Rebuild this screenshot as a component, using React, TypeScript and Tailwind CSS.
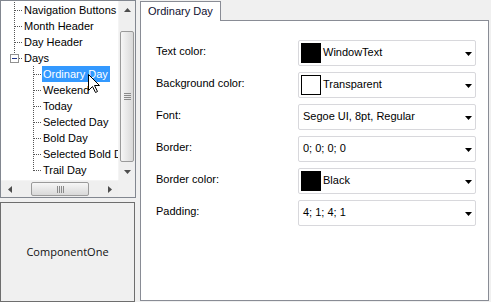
import { FC } from "react";

type TreeItem = { label: string; level: 0 | 1; last?: boolean; expander?: boolean; selected?: boolean };

const treeItems: TreeItem[] = [
    { label: "Navigation Buttons", level: 0 },
    { label: "Month Header", level: 0 },
    { label: "Day Header", level: 0 },
    { label: "Days", level: 0, last: true, expander: true },
    { label: "Ordinary Day", level: 1, selected: true },
    { label: "Weekend", level: 1 },
    { label: "Today", level: 1 },
    { label: "Selected Day", level: 1 },
    { label: "Bold Day", level: 1 },
    { label: "Selected Bold Day", level: 1 },
    { label: "Trail Day", level: 1, last: true },
];

const DOT = "#555";

// dotted tree connectors for a single row
const Connector: FC<{ item: TreeItem }> = ({ item }) => {
    if (item.level === 0) {
        return (
            <svg width="22" height="16" className="shrink-0">
                {item.expander ? (
                    <>
                        <line x1="13.5" y1="0" x2="13.5" y2="4" stroke={DOT} strokeDasharray="1 1" />
                        <rect x="9.5" y="4.5" width="8" height="8" fill="#fff" stroke="#919191" />
                        <line x1="11" y1="8.5" x2="16" y2="8.5" stroke="#1e3287" />
                        <line x1="18" y1="8.5" x2="22" y2="8.5" stroke={DOT} strokeDasharray="1 1" />
                    </>
                ) : (
                    <>
                        <line x1="13.5" y1="0" x2="13.5" y2="16" stroke={DOT} strokeDasharray="1 1" />
                        <line x1="14" y1="8.5" x2="22" y2="8.5" stroke={DOT} strokeDasharray="1 1" />
                    </>
                )}
            </svg>
        );
    }
    return (
        <svg width="41" height="16" className="shrink-0">
            <line x1="32.5" y1="0" x2="32.5" y2={item.last ? 9 : 16} stroke={DOT} strokeDasharray="1 1" />
            <line x1="33" y1="8.5" x2="41" y2="8.5" stroke={DOT} strokeDasharray="1 1" />
        </svg>
    );
};

const Arrow: FC<{ dir: "up" | "down" | "left" | "right" }> = ({ dir }) => {
    const pts = {
        up: "0,4 7,4 3.5,0",
        down: "0,0 7,0 3.5,4",
        left: "4,0 4,7 0,3.5",
        right: "0,0 0,7 4,3.5",
    }[dir];
    const vertical = dir === "up" || dir === "down";
    return (
        <svg width={vertical ? 7 : 4} height={vertical ? 4 : 7}>
            <polygon points={pts} fill="#4d4d4d" />
        </svg>
    );
};

const ComboArrow: FC = () => (
    <svg width="7" height="4" className="ml-auto mr-[3px] mt-[2px] shrink-0">
        <polygon points="0,0 7,0 3.5,4" fill="#000" />
    </svg>
);

type Row = { label: string; value: string; swatch?: "black" | "empty" };

const rows: Row[] = [
    { label: "Text color:", value: "WindowText", swatch: "black" },
    { label: "Background color:", value: "Transparent", swatch: "empty" },
    { label: "Font:", value: "Segoe UI, 8pt, Regular" },
    { label: "Border:", value: "0; 0; 0; 0" },
    { label: "Border color:", value: "Black", swatch: "black" },
    { label: "Padding:", value: "4; 1; 4; 1" },
];

const App: FC = () => {
    return (
        <div className="relative w-[491px] h-[302px] bg-[#f0f0f0] flex font-['Liberation_Sans',Arial,sans-serif] text-[11px] text-black overflow-hidden">
            {/* LEFT COLUMN */}
            <div className="w-[136px] flex flex-col gap-[4px]">
                <div className="h-[198px] border border-[#828790] bg-white flex flex-col">
                    <div className="flex h-[179px]">
                        {/* tree */}
                        <div className="w-[117px] pt-[1px] overflow-hidden">
                            {treeItems.map((item) => (
                                <div key={item.label} className="flex h-[16px] items-center whitespace-nowrap">
                                    <Connector item={item} />
                                    <span
                                        className={
                                            item.selected
                                                ? "bg-[#3399ff] text-white pl-[1px] pr-[2px] leading-[16px]"
                                                : "pl-[1px] pr-[2px] leading-[16px]"
                                        }
                                    >
                                        {item.label}
                                    </span>
                                </div>
                            ))}
                        </div>
                        {/* vertical scrollbar */}
                        <div className="w-[17px] bg-[#efefef] flex flex-col border-l border-[#f4f4f4]">
                            <div className="h-[17px] flex items-center justify-center">
                                <Arrow dir="up" />
                            </div>
                            <div className="mt-[13px] h-[131px] mx-[1px] rounded-[2px] border border-[#9a9a9a] bg-gradient-to-r from-[#f6f6f6] to-[#d9d9d9] flex flex-col items-center justify-center gap-[1px]">
                                <div className="w-[7px] h-[1px] bg-[#8a8a8a]" />
                                <div className="w-[7px] h-[1px] bg-[#8a8a8a]" />
                                <div className="w-[7px] h-[1px] bg-[#8a8a8a]" />
                                <div className="w-[7px] h-[1px] bg-[#8a8a8a]" />
                            </div>
                            <div className="flex-1" />
                            <div className="h-[17px] flex items-center justify-center">
                                <Arrow dir="down" />
                            </div>
                        </div>
                    </div>
                    {/* horizontal scrollbar */}
                    <div className="flex h-[17px]">
                        <div className="w-[117px] bg-[#efefef] flex border-t border-[#f4f4f4]">
                            <div className="w-[17px] flex items-center justify-center">
                                <Arrow dir="left" />
                            </div>
                            <div className="ml-[13px] w-[58px] my-[1px] rounded-[2px] border border-[#9a9a9a] bg-gradient-to-b from-[#f6f6f6] to-[#d9d9d9] flex items-center justify-center gap-[1px]">
                                <div className="w-[1px] h-[7px] bg-[#8a8a8a]" />
                                <div className="w-[1px] h-[7px] bg-[#8a8a8a]" />
                                <div className="w-[1px] h-[7px] bg-[#8a8a8a]" />
                                <div className="w-[1px] h-[7px] bg-[#8a8a8a]" />
                            </div>
                            <div className="flex-1" />
                            <div className="w-[17px] flex items-center justify-center">
                                <Arrow dir="right" />
                            </div>
                        </div>
                        <div className="w-[17px] bg-[#f0f0f0]" />
                    </div>
                </div>
                <div className="flex-1 w-[135px] border border-[#6e6e6e] bg-[#f0f0f0] flex items-center justify-center">
                    <span className="font-['Open_Sans',sans-serif] text-[11px] text-[#101010] mt-[1px]">ComponentOne</span>
                </div>
            </div>

            {/* RIGHT COLUMN */}
            <div className="ml-[4px] w-[349px] flex flex-col pb-[1px]">
                <div className="h-[21px] flex items-end">
                    <div className="w-[81px] h-[20px] bg-white border-l border-t border-r border-[#898c95] pl-[7px] leading-[18px] text-[#101030]">
                        Ordinary Day
                    </div>
                    <div className="flex-1 border-b border-[#898c95]" />
                </div>
                <div className="flex-1 bg-white border-l border-r border-b border-[#898c95] pl-[15px] pt-[19px] flex flex-col gap-[6px]">
                    {rows.map((row) => (
                        <div key={row.label} className="flex items-center h-[26px]">
                            <div className="w-[142px] -mt-[3px]">{row.label}</div>
                            <div className="w-[178px] h-[26px] border border-[#d8d8dc] rounded-[2px] bg-white flex items-center">
                                {row.swatch === "black" && (
                                    <div className="ml-[2px] w-[20px] h-[20px] bg-black shrink-0" />
                                )}
                                {row.swatch === "empty" && (
                                    <div className="ml-[2px] w-[20px] h-[20px] border border-black bg-white shrink-0" />
                                )}
                                <span className={row.swatch ? "ml-[2px] -mt-[2px]" : "ml-[4px] -mt-[2px]"}>{row.value}</span>
                                <ComboArrow />
                            </div>
                        </div>
                    ))}
                </div>
            </div>

            {/* mouse cursor over the tree */}
            <svg className="absolute left-[88px] top-[74px]" width="12" height="20" viewBox="0 0 12 20">
                <path d="M0.5 0.5 L0.5 16.5 L4.5 12.5 L7.5 18.5 L9.5 17.5 L6.5 11.5 L11.5 11.5 Z" fill="#fff" stroke="#000" strokeLinejoin="miter" />
            </svg>
        </div>
    );
};

export default App;
